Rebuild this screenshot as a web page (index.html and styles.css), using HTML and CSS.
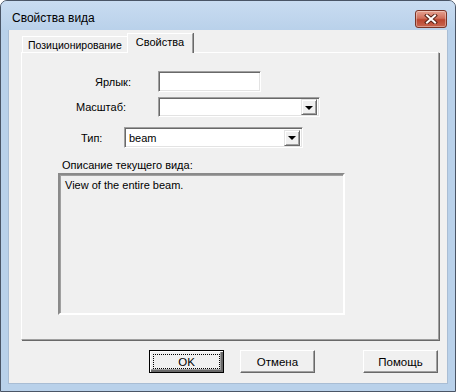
FILE: index.html
```html
<!DOCTYPE html>
<html lang="ru">

<head>
  <meta charset="UTF-8">
  <meta name="viewport" content="width=device-width, initial-scale=1.0">
  <title>Свойства вида</title>
  <link rel="stylesheet" href="styles.css">
</head>

<body>
  <div class="window">
    <div class="titlebar">
      <span class="title">Свойства вида</span>
      <button type="button" class="close" aria-label="Закрыть">
        <svg width="14" height="10" viewBox="0 0 14 10">
          <path d="M3 1.5 L11 8.5 M11 1.5 L3 8.5" stroke="#5a2418" stroke-width="4" stroke-linecap="square" />
          <path d="M3 1.5 L11 8.5 M11 1.5 L3 8.5" stroke="#fff" stroke-width="2" stroke-linecap="square" />
        </svg>
      </button>
    </div>

    <div class="client">
      <div class="tabs">
        <div class="tab">Позиционирование</div>
        <div class="tab active">Свойства</div>
      </div>

      <div class="panel">
        <div class="row row-label">
          <span class="lbl">Ярлык:</span>
          <div class="edit edit-label"></div>
        </div>
        <div class="row row-scale">
          <span class="lbl">Масштаб:</span>
          <div class="edit combo combo-scale">
            <span class="combo-text"></span>
            <span class="drop"></span>
          </div>
        </div>
        <div class="row row-type">
          <span class="lbl">Тип:</span>
          <div class="edit combo combo-type">
            <span class="combo-text">beam</span>
            <span class="drop"></span>
          </div>
        </div>

        <div class="desc-label">Описание текущего вида:</div>
        <div class="desc">View of the entire beam.</div>
      </div>

      <div class="buttons">
        <button type="button" class="btn btn-default"><span class="focus">OK</span></button>
        <button type="button" class="btn btn-cancel">Отмена</button>
        <button type="button" class="btn btn-help">Помощь</button>
      </div>
    </div>
  </div>
</body>

</html>
```

FILE: styles.css
```css
* {
  box-sizing: border-box;
}

body {
  margin: 0;
  background: #fff;
  font-family: "Liberation Sans", Arial, sans-serif;
  font-size: 11px;
  color: #000;
}

.window {
  width: 456px;
  height: 392px;
  border: 1px solid #4a5566;
  border-radius: 7px 7px 0 0;
  background: #b9d1ea;
  display: flex;
  flex-direction: column;
  overflow: hidden;
}

.titlebar {
  height: 29px;
  display: flex;
  align-items: center;
  justify-content: space-between;
  padding: 0 8px 0 11px;
  background: linear-gradient(#c9dcf1, #b9d1ea);
}

.title {
  font-size: 12px;
  padding-top: 4px;
}

.close {
  width: 32px;
  height: 18px;
  margin-top: 7px;
  padding: 0;
  display: flex;
  align-items: center;
  justify-content: center;
  border: 1px solid #7a3426;
  border-radius: 3px;
  background: linear-gradient(#e6a291, #d0705c 45%, #bb4630 55%, #c9664f);
  box-shadow: inset 0 0 0 1px rgba(255, 255, 255, 0.35);
}

.client {
  width: 440px;
  height: 354px;
  margin-left: 7px;
  padding: 3px 0 0 12px;
  background: #f0f0f0;
  border: 1px solid #a9bdd4;
  border-top: none;
}

/* tabs */
.tabs {
  display: flex;
  align-items: flex-end;
  height: 20px;
  margin-bottom: -1px;
  padding-left: 1px;
}

.tab {
  height: 16px;
  margin-bottom: 1px;
  padding: 2px 5px 0 5px;
  border-top: 1px solid #fff;
  border-left: 1px solid #fff;
  border-right: 1px solid #a0a0a0;
  box-shadow: 1px 0 0 #696969;
  font-size: 10.5px;
  white-space: nowrap;
}

.tab.active {
  position: relative;
  z-index: 1;
  height: 20px;
  margin-bottom: 0;
  margin-left: -1px;
  padding: 2px 8px 0 8px;
  background: #f0f0f0;
  font-size: 11px;
}

.panel {
  width: 418px;
  height: 288px;
  padding-top: 18px;
  border-top: 1px solid #fff;
  border-left: 1px solid #fff;
  border-right: 1px solid #a0a0a0;
  border-bottom: 1px solid #a0a0a0;
  box-shadow: 1px 1px 0 #696969;
}

/* form rows */
.row {
  display: flex;
  align-items: center;
}

.row-label .lbl {
  width: 109px;
  text-align: right;
  margin-right: 27px;
}

.row-scale {
  margin-top: 5px;
}

.row-scale .lbl {
  width: 104px;
  text-align: right;
  margin-right: 32px;
}

.row-type {
  margin-top: 10px;
  padding-left: 59px;
}

.row-type .lbl {
  width: 43px;
}

.edit {
  height: 21px;
  background: #fff;
  border: 1px solid;
  border-color: #a0a0a0 #fff #fff #a0a0a0;
  box-shadow: inset 1px 1px 0 #696969, inset -1px -1px 0 #e3e3e3;
}

.edit-label {
  width: 103px;
}

.combo {
  display: flex;
  align-items: center;
  padding: 2px 2px 2px 3px;
}

.combo-scale {
  width: 162px;
  height: 20px;
}

.combo-type {
  width: 179px;
}

.combo-text {
  flex: 1;
  padding-left: 1px;
}

.drop {
  width: 16px;
  height: 16px;
  display: flex;
  align-items: center;
  justify-content: center;
  background: #f0f0f0;
  border: 1px solid;
  border-color: #e3e3e3 #696969 #696969 #e3e3e3;
  box-shadow: inset 1px 1px 0 #fff, inset -1px -1px 0 #a0a0a0;
}

.drop::after {
  content: "";
  border-left: 4px solid transparent;
  border-right: 4px solid transparent;
  border-top: 4px solid #000;
  margin-top: 1px;
}

/* description */
.desc-label {
  margin: 11px 0 0 40px;
  line-height: 13px;
}

.desc {
  width: 287px;
  height: 142px;
  margin: 1px 0 0 36px;
  padding: 4px 0 0 5px;
  border: 2px solid;
  border-color: #8a8a8a #fff #fff #8a8a8a;
  box-shadow: inset 1px 1px 0 #a0a0a0;
}

/* dialog buttons */
.buttons {
  display: flex;
  margin-top: 10px;
  padding-left: 128px;
}

.btn {
  width: 75px;
  height: 23px;
  padding: 0;
  font-family: inherit;
  font-size: 11.5px;
  color: #000;
  background: #f0f0f0;
  border: 1px solid;
  border-color: #fff #696969 #696969 #fff;
  box-shadow: inset -1px -1px 0 #a0a0a0;
}

.btn-default {
  border: 1px solid #000;
  box-shadow: inset 1px 1px 0 #fff, inset -2px -2px 0 #696969, inset -3px -3px 0 #a0a0a0;
  padding: 3px;
}

.focus {
  display: flex;
  align-items: center;
  justify-content: center;
  height: 100%;
  border: 1px dotted #000;
}

.btn-cancel {
  margin-left: 16px;
}

.btn-help {
  margin-left: 48px;
}
```
